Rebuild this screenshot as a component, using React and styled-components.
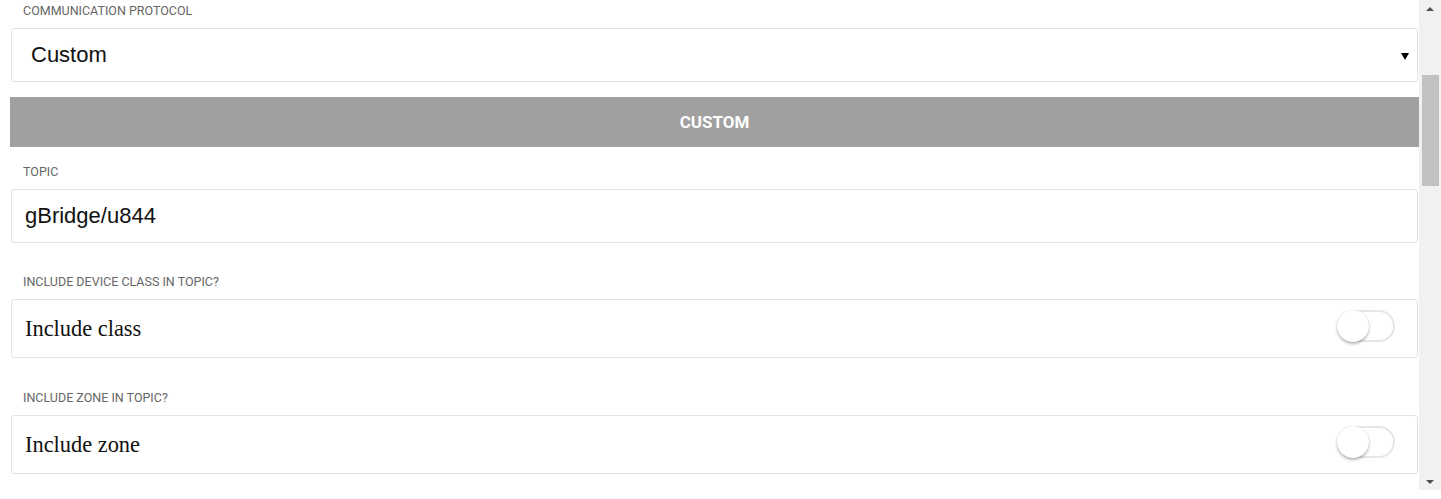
import React from "react";
import styled, { createGlobalStyle } from "styled-components";

const Global = createGlobalStyle`
  html, body { margin: 0; padding: 0; background: #fff; }
  body { overflow: hidden; }
`;

const Frame = styled.div`
  display: flex;
  width: 1441px;
  height: 499px;
  background: #fff;
`;

const Content = styled.div`
  flex: 1;
  min-width: 0;
  padding: 4px 0 0 10px;
  height: 499px;
  box-sizing: border-box;
  overflow: hidden;
`;

const Field = styled.div`
  margin: ${(p) => p.$top || 0}px 1px 0 1px;
`;

const Label = styled.div`
  font-family: Roboto, "Liberation Sans", sans-serif;
  font-size: 12.5px;
  line-height: 14px;
  color: #666;
  text-transform: uppercase;
  padding-left: 12px;
  margin-bottom: 10px;
`;

const Box = styled.div`
  display: flex;
  align-items: center;
  height: ${(p) => p.$h}px;
  box-sizing: border-box;
  border: 1px solid #e2e2e2;
  border-radius: 3px;
  background: #fff;
  padding: 0 22px 0 ${(p) => p.$pl || 13}px;
`;

const ValueText = styled.span`
  flex: 1;
  font-family: "Liberation Sans", Arial, sans-serif;
  font-size: 22px;
  color: #111;
`;

const SerifText = styled.span`
  flex: 1;
  font-family: "Liberation Serif", "Times New Roman", serif;
  font-size: 22.4px;
  color: #111;
`;

const SelectArrow = styled.span`
  width: 0;
  height: 0;
  border-left: 4px solid transparent;
  border-right: 4px solid transparent;
  border-top: 7px solid #000;
  margin-right: -14px;
  margin-top: 2px;
`;

const Bar = styled.div`
  margin-top: 15px;
  height: 50px;
  background: #a0a0a0;
  display: flex;
  align-items: center;
  justify-content: center;
  font-family: Roboto, "Liberation Sans", sans-serif;
  font-weight: 700;
  font-size: 17px;
  color: #fff;
`;

const Toggle = styled.span`
  position: relative;
  width: 58px;
  height: 32px;
  box-sizing: border-box;
  border: 2px solid #e6e6e6;
  border-radius: 16px;
  background: #fff;
  margin-bottom: 6px;
`;

const Knob = styled.span`
  position: absolute;
  left: -2px;
  top: -2px;
  width: 32px;
  height: 32px;
  border-radius: 50%;
  background: #fff;
  box-shadow: 0 2px 3px rgba(0, 0, 0, 0.28), 0 0 1px rgba(0, 0, 0, 0.15);
`;

const Scrollbar = styled.div`
  width: 22px;
  height: 490px;
  background: #f1f1f1;
  display: flex;
  flex-direction: column;
  align-items: center;
`;

const ArrowBtn = styled.div`
  height: 17px;
  width: 100%;
  display: flex;
  align-items: center;
  justify-content: center;
`;

const Tri = styled.span`
  width: 0;
  height: 0;
  border-left: 4.5px solid transparent;
  border-right: 4.5px solid transparent;
  ${(p) =>
    p.$up
      ? "border-bottom: 4.5px solid #505050;"
      : "border-top: 4.5px solid #505050;"}
`;

const Thumb = styled.div`
  margin-top: 58px;
  width: 17px;
  height: 111px;
  background: #c1c1c1;
`;

const Spacer = styled.div`
  flex: 1;
`;

export default function App() {
  return (
    <>
      <Global />
      <Frame>
        <Content>
          <Field>
            <Label>Communication protocol</Label>
            <Box $h={54} $pl={19}>
              <ValueText>Custom</ValueText>
              <SelectArrow />
            </Box>
          </Field>
          <Bar>CUSTOM</Bar>
          <Field $top={18}>
            <Label>Topic</Label>
            <Box $h={54}>
              <ValueText>gBridge/u844</ValueText>
            </Box>
          </Field>
          <Field $top={32}>
            <Label>Include device class in topic?</Label>
            <Box $h={59}>
              <SerifText>Include class</SerifText>
              <Toggle>
                <Knob />
              </Toggle>
            </Box>
          </Field>
          <Field $top={33}>
            <Label>Include zone in topic?</Label>
            <Box $h={59}>
              <SerifText>Include zone</SerifText>
              <Toggle>
                <Knob />
              </Toggle>
            </Box>
          </Field>
        </Content>
        <Scrollbar>
          <ArrowBtn>
            <Tri $up />
          </ArrowBtn>
          <Thumb />
          <Spacer />
          <ArrowBtn>
            <Tri />
          </ArrowBtn>
        </Scrollbar>
      </Frame>
    </>
  );
}
